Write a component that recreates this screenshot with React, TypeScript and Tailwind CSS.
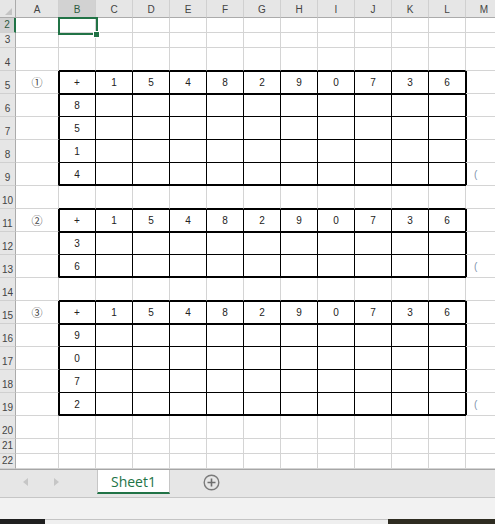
import React from 'react';

const COLS = ['A', 'B', 'C', 'D', 'E', 'F', 'G', 'H', 'I', 'J', 'K', 'L', 'M'];
const HEAD = ['+', '1', '5', '4', '8', '2', '9', '0', '7', '3', '6'];

const TABLES = [
  { mark: '①', head: 5, body: ['8', '5', '1', '4'] },
  { mark: '②', head: 11, body: ['3', '6'] },
  { mark: '③', head: 15, body: ['9', '0', '7', '2'] },
];

// rows 2..22, short rows are 15px, the rest 23px
const ROWS = Array.from({ length: 21 }, (_, i) => i + 2).map((n) => ({
  n,
  short: n === 2 || n === 3 || n === 21 || n === 22,
}));

type Role = 'head' | 'first' | 'mid' | 'last' | 'above' | null;

function rowRole(n: number): { role: Role; t: (typeof TABLES)[number] | null } {
  for (const t of TABLES) {
    const end = t.head + t.body.length;
    if (n === t.head - 1) return { role: 'above', t };
    if (n === t.head) return { role: 'head', t };
    if (n === t.head + 1) return { role: 'first', t };
    if (n === end) return { role: 'last', t };
    if (n > t.head && n < end) return { role: 'mid', t };
  }
  return { role: null, t: null };
}

function cellClass(role: Role, c: number) {
  const inT = role === 'head' || role === 'first' || role === 'mid' || role === 'last';
  const inner = c >= 2 && c <= 12;
  const r = inT && c >= 1 && c <= 12 ? 'border-r-black' : 'border-r-[#d4d4d4]';
  const b = (inT || role === 'above') && inner ? 'border-b-black' : 'border-b-[#d4d4d4]';
  let s = '';
  if (inT && inner) {
    const top = role === 'head' || role === 'first';
    const left = c === 2;
    const bot = role === 'last';
    if (top && left) s = 'shadow-[inset_1px_1px_0_#000]';
    else if (top) s = 'shadow-[inset_0_1px_0_#000]';
    else if (bot && left) s = 'shadow-[inset_1px_-1px_0_#000]';
    else if (bot) s = 'shadow-[inset_0_-1px_0_#000]';
    else if (left) s = 'shadow-[inset_1px_0_0_#000]';
  }
  if (inT && c === 13) s = 'shadow-[inset_1px_0_0_#000]';
  return `border-r border-b ${r} ${b} ${s}`;
}

function cellText(n: number, c: number) {
  const { role, t } = rowRole(n);
  if (!t) return '';
  if (role === 'head') {
    if (c === 1) return t.mark;
    if (c >= 2 && c <= 12) return HEAD[c - 2];
  }
  if ((role === 'first' || role === 'mid' || role === 'last') && c === 2) return t.body[n - t.head - 1];
  if (role === 'last' && c === 13) return '(';
  return '';
}

export default function App() {
  return (
    <div className="w-[495px] h-[524px] overflow-hidden bg-white flex flex-col font-['Liberation_Sans',Arial,sans-serif]">
      <div className="h-[469px] overflow-hidden">
        {/* column headers */}
        <div className="grid grid-cols-[16px_43px_repeat(12,37px)] h-[18px]">
          <div className="bg-[#e6e6e6] border-r border-b border-[#ababab] flex items-end justify-end pr-[2px] pb-[1px]">
            <svg width="8" height="8" viewBox="0 0 8 8">
              <polygon points="7,0 7,7 0,7" fill="#c4c4c4" />
            </svg>
          </div>
          {COLS.map((l) => (
            <div
              key={l}
              className={`${l === 'B' ? 'bg-[#d2d2d2] text-[#2d5a41]' : 'bg-[#e6e6e6] text-[#444]'} border-r border-r-[#d0d0d0] border-b border-b-[#ababab] flex items-end justify-center pb-[2px] text-[10px] leading-[10px]`}
            >
              {l}
            </div>
          ))}
        </div>

        {ROWS.map(({ n, short }) => {
          const { role } = rowRole(n);
          return (
            <div
              key={n}
              className={`grid grid-cols-[16px_43px_repeat(12,37px)] ${short ? 'h-[15px]' : 'h-[23px]'}`}
            >
              <div
                className={`${n === 2 ? 'bg-[#d2d2d2] text-[#2d5a41] border-r-2 border-r-[#217346]' : 'bg-[#e6e6e6] text-[#444] border-r border-r-[#ababab]'} border-b border-b-[#d0d0d0] flex items-end justify-center pb-[2px] text-[10px] leading-[10px]`}
              >
                {n}
              </div>
              {COLS.map((l, i) => {
                const c = i + 1;
                const txt = cellText(n, c);
                return (
                  <div
                    key={l}
                    className={`flex items-center ${n === 2 && c === 2 ? 'relative z-10' : ''} ${c === 13 ? 'justify-start pl-[8px] text-[#7f93ad]' : 'justify-center text-[#222]'} ${c === 1 ? "font-['Noto_Sans_CJK_JP',sans-serif] text-[11px] text-[#444]" : 'text-[10px]'} ${cellClass(role, c)}`}
                  >
                    {txt}
                    {n === 2 && c === 2 && (
                      <div className="absolute left-[-1px] top-[-1px] w-[40px] h-[18px] border-2 border-[#217346]">
                        <div className="absolute left-[33px] top-[12px] w-[7px] h-[7px] bg-[#217346] border border-white" />
                      </div>
                    )}
                  </div>
                );
              })}
            </div>
          );
        })}
      </div>

      {/* sheet tabs */}
      <div className="h-[28px] bg-[#e6e6e6] border-t border-[#a6a6a6] flex items-start">
        <div className="w-[97px] h-[24px] flex items-center">
          <svg className="ml-[23px]" width="6" height="8" viewBox="0 0 6 8">
            <polygon points="5,0 5,8 0,4" fill="#c6c6c6" />
          </svg>
          <svg className="ml-[24px]" width="6" height="8" viewBox="0 0 6 8">
            <polygon points="1,0 1,8 6,4" fill="#c6c6c6" />
          </svg>
        </div>
        <div className="w-[73px] h-[24px] bg-white border-x border-[#c6c6c6] border-b-2 border-b-[#217346] flex items-center justify-center text-[14px] text-[#217346] font-['Open_Sans','Noto_Sans',sans-serif]">
          Sheet1
        </div>
        <div className="ml-[33px] h-[24px] flex items-center">
          <svg width="17" height="17" viewBox="0 0 17 17">
            <circle cx="8.5" cy="8.5" r="7.3" fill="none" stroke="#7a7a7a" strokeWidth="1.4" />
            <path d="M8.5 4.5v8M4.5 8.5h8" stroke="#6e6e6e" strokeWidth="1.6" />
          </svg>
        </div>
      </div>

      {/* status bar */}
      <div className="h-[22px] bg-[#f2f2f2] border-t border-[#c6c6c6]" />

      {/* taskbar edge */}
      <div className="h-[5px] flex">
        <div className="w-[45px] bg-[#1f1f1f]" />
        <div className="w-[343px] bg-[#efefef] border-t border-[#c4c4c4]" />
        <div className="flex-1 bg-[#2e2c21]" />
      </div>
    </div>
  );
}
